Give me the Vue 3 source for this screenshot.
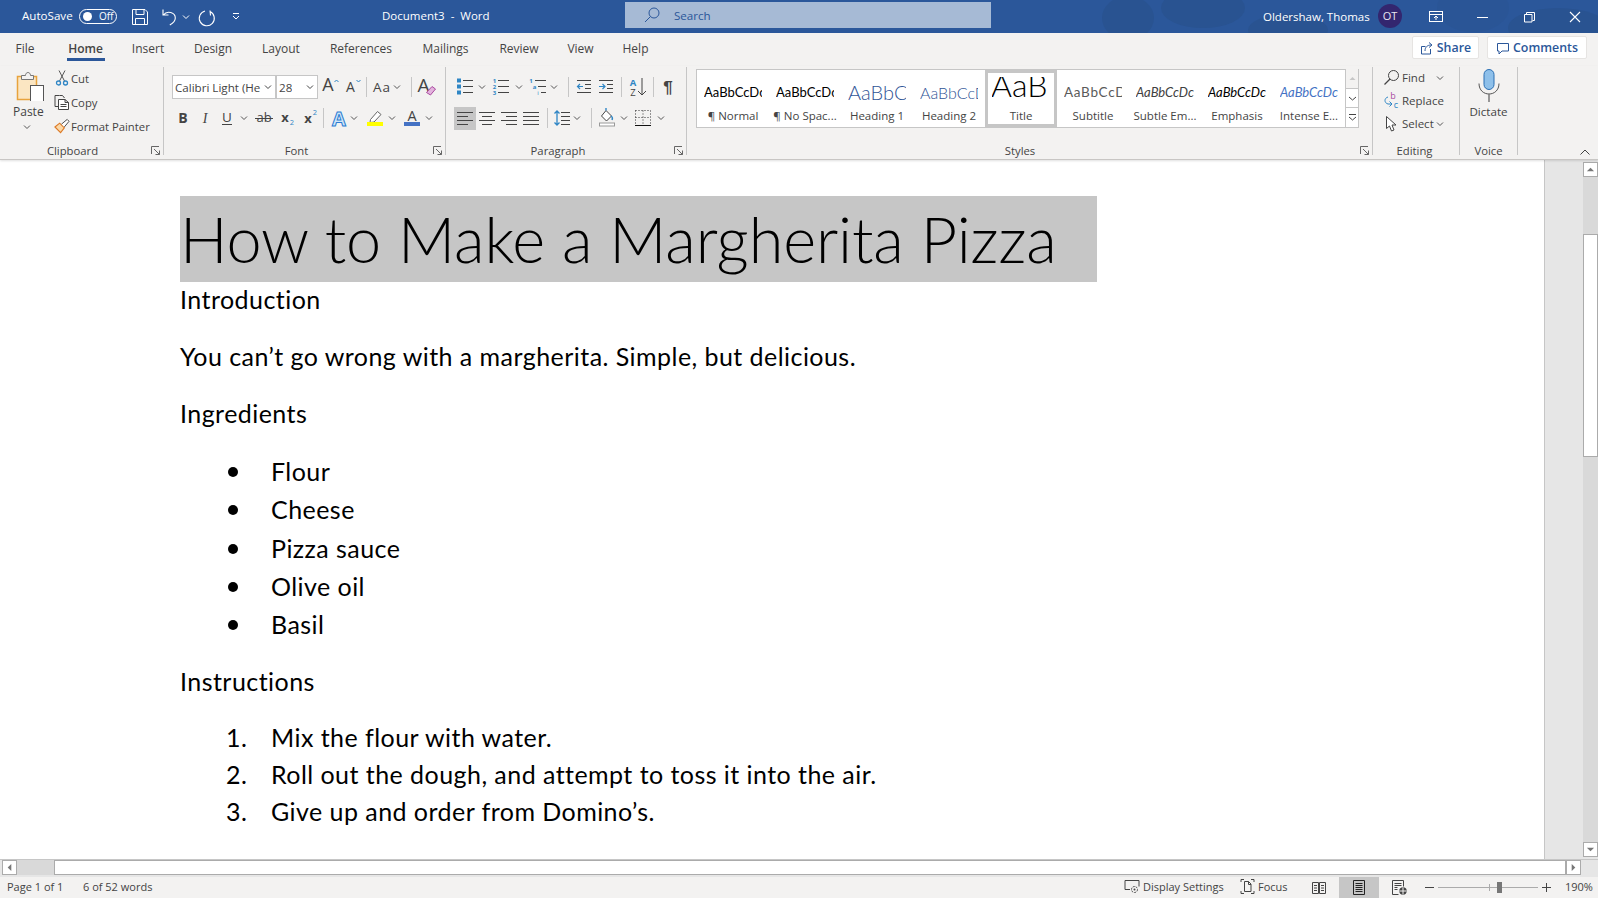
<script setup>
import { h } from 'vue'

const G = '#444'
const BL = '#2f86c5'
const F = 'font-family="Open Sans, sans-serif"'
const line = (x1, y, x2, c = G) => `<path d="M${x1} ${y}.5H${x2}" stroke="${c}" fill="none"/>`
const lines = (arr) => arr.map((a) => line(a[0], a[1], a[2])).join('')

const ICONS = {
  chev: [8, `<path d="M1 8.5l3 3 3-3" fill="none" stroke="#555"/>`],
  chevw: [8, `<path d="M1 8.5l3 3 3-3" fill="none" stroke="#fff"/>`],
  sep: [1, `<rect width="1" height="20" fill="#c6c6c6"/>`],
  grow: [20, `<text x="8" y="14" font-size="18" text-anchor="middle" ${F} fill="${G}">A</text><path d="M14.5 5l2-2 2 2" fill="none" stroke="${BL}"/>`],
  shrink: [20, `<text x="8.5" y="14.5" font-size="14" text-anchor="middle" ${F} fill="${G}">A</text><path d="M14.5 3l2 2 2-2" fill="none" stroke="${BL}"/>`],
  aa: [20, `<text x="10" y="14.5" font-size="13.5" letter-spacing="1" text-anchor="middle" ${F} fill="${G}">Aa</text>`],
  clear: [20, `<text x="6.5" y="15" font-size="19" text-anchor="middle" ${F} fill="${G}">A</text><path d="M9.5 15.5l5.5-6 3.5 2.5-5 6z" fill="#e3b3dd" stroke="#a94aa0"/>`],
  bold: [20, `<text x="10" y="15" font-size="14" font-weight="700" text-anchor="middle" ${F} fill="${G}">B</text>`],
  ital: [20, `<text x="10" y="15" font-size="14" font-style="italic" text-anchor="middle" font-family="Liberation Serif, serif" fill="${G}">I</text>`],
  under: [20, `<text x="10" y="14" font-size="13.5" text-anchor="middle" ${F} fill="${G}">U</text>${line(5, 16, 15)}`],
  strike: [20, `<text x="10" y="14" font-size="13" text-anchor="middle" ${F} fill="${G}">ab</text>${line(1, 10, 19)}`],
  sub: [20, `<text x="8" y="14" font-size="13" font-weight="700" text-anchor="middle" ${F} fill="${G}">x</text><text x="15" y="17" font-size="7.5" text-anchor="middle" ${F} fill="${BL}">2</text>`],
  sup: [20, `<text x="8" y="15" font-size="13" font-weight="700" text-anchor="middle" ${F} fill="${G}">x</text><text x="15" y="7" font-size="7.5" text-anchor="middle" ${F} fill="${BL}">2</text>`],
  fx: [22, `<text x="11" y="17.5" font-size="20" font-weight="700" text-anchor="middle" ${F} fill="#cfe6f7" stroke="#2b7cd3" stroke-width="1">A</text>`],
  hl: [20, `<path d="M5.5 11.5l7-8 3.5 3-7 7.5-4 .5z" fill="#fff" stroke="#666"/><rect x="2" y="14" width="16" height="4" fill="#ffff00"/>`],
  color: [20, `<text x="10" y="12.5" font-size="14.5" text-anchor="middle" ${F} fill="${G}">A</text><rect x="2" y="14" width="16" height="4" fill="#4472c4"/>`],
  bullets: [20, `<rect x="2" y="1.5" width="4" height="4" fill="${BL}"/><rect x="2" y="7.5" width="4" height="4" fill="${BL}"/><rect x="2" y="13.5" width="4" height="4" fill="${BL}"/>${lines([[8, 3, 18], [8, 9, 18], [8, 15, 18]])}`],
  num: [20, `<text x="3.5" y="6" font-size="6" font-weight="700" text-anchor="middle" ${F} fill="${BL}">1</text><text x="3.5" y="12" font-size="6" font-weight="700" text-anchor="middle" ${F} fill="${BL}">2</text><text x="3.5" y="18" font-size="6" font-weight="700" text-anchor="middle" ${F} fill="${BL}">3</text>${lines([[7, 3, 18], [7, 9, 18], [7, 15, 18]])}`],
  multi: [20, `<text x="3" y="6" font-size="6" font-weight="700" text-anchor="middle" ${F} fill="${BL}">1</text><text x="6.5" y="12" font-size="6" font-weight="700" text-anchor="middle" ${F} fill="${BL}">a</text><text x="10" y="18" font-size="6" text-anchor="middle" ${F} fill="${BL}">i</text>${lines([[7, 3, 18], [10, 9, 18], [13, 15, 18]])}`],
  outdent: [20, `${lines([[3, 3, 17], [11, 7, 17], [11, 11, 17], [3, 15, 17]])}<path d="M9 9.5H3.5m2.5-2.5l-2.5 2.5 2.5 2.5" fill="none" stroke="${BL}" stroke-width="1.2"/>`],
  indent: [20, `${lines([[3, 3, 17], [11, 7, 17], [11, 11, 17], [3, 15, 17]])}<path d="M3 9.5h6m-2.5-2.5l2.5 2.5-2.5 2.5" fill="none" stroke="${BL}" stroke-width="1.2"/>`],
  sort: [20, `<text x="6" y="8.5" font-size="9.5" font-weight="700" text-anchor="middle" ${F} fill="${BL}">A</text><text x="6" y="18.5" font-size="9.5" text-anchor="middle" ${F} fill="${G}">Z</text><path d="M15 1v17m-4-4l4 4 4-4" fill="none" stroke="${G}"/>`],
  pil: [20, `<text x="10" y="15.5" font-size="17" font-weight="700" text-anchor="middle" font-family="Liberation Sans, sans-serif" fill="${G}">¶</text>`],
  left: [20, lines([[2, 4, 18], [2, 8, 13], [2, 12, 18], [2, 16, 13]])],
  center: [20, lines([[2, 4, 18], [5, 8, 15], [2, 12, 18], [5, 16, 15]])],
  right: [20, lines([[2, 4, 18], [7, 8, 18], [2, 12, 18], [7, 16, 18]])],
  just: [20, lines([[2, 4, 18], [2, 8, 18], [2, 12, 18], [2, 16, 18]])],
  spacing: [20, `${lines([[9, 4, 18], [9, 8, 18], [9, 12, 18], [9, 16, 18]])}<path d="M5 3v14M2.5 5.5L5 3l2.5 2.5M2.5 14.5L5 17l2.5-2.5" fill="none" stroke="${BL}" stroke-width="1.3"/>`],
  shade: [20, `<path d="M9 2.5l5.5 5.5-5 5-5-5z" fill="#fff" stroke="${G}"/><path d="M9 2.5V0M14 8c1.5 1 1.5 3 1 4" fill="none" stroke="${BL}" stroke-width="1.4"/><rect x="2.5" y="15" width="15" height="3" fill="#fff" stroke="#999"/>`],
  borders: [20, `<path d="M2.5 2.5H17.5V17M2.5 2.5V17M10 2.5V17M2.5 9.5H17.5" fill="none" stroke="#333" stroke-dasharray="1 2"/><path d="M2 17.5H18" stroke="#111" fill="none"/>`],
  save: [18, `<path d="M1.5 2.5h12.5l2.5 2.5v12.500H1.500z" fill="none" stroke="#fff"/><path d="M5 2.500v5h8v-5M4.500 17.500v-6h9v6" fill="none" stroke="#fff"/>`],
  undo: [18, `<path d="M2 2.500v5.500h5.500M2.300 8c4-5 12-2.500 12 3 0 3-2 5-5.500 7" fill="none" stroke="#fff" stroke-width="1.1"/>`],
  redo: [18, `<path d="M11 1.500l.5 5M11 2.500a7.500 7.500 0 1 1-5-.5" fill="none" stroke="#fff" stroke-width="1.1" transform="translate(0 2)"/>`],
  qat: [8, `<path d="M1 6.500h6M1 9l3 3 3-3" fill="none" stroke="#fff"/>`],
  display: [16, `<rect x="1.500" y="4.500" width="13" height="10" fill="none" stroke="#fff"/><path d="M1.500 7.500h13M8 13V9M6 11l2-2 2 2" fill="none" stroke="#fff"/>`],
  min: [14, `<path d="M1 10.500h11" stroke="#fff" fill="none"/>`],
  restore: [14, `<path d="M2.500 7.500h7.500v7.500H2.500zM4.500 7V5.500h8v8H10.500" fill="none" stroke="#fff"/>`],
  close: [14, `<path d="M2 5l10 10M12 5L2 15" stroke="#fff" fill="none" stroke-width="1.1"/>`],
}

function place(start, items) {
  let end = start
  return items.map(([n, cx]) => {
    const w = ICONS[n][0]
    const m = cx - w / 2 - end
    end = cx + w / 2
    return { n, w, m }
  })
}

const ToolRow = (p) =>
  h('div', { class: 'tool-row' }, place(p.start, p.items).map((it) =>
    h('svg', { class: 'tool', width: it.w, height: 20, viewBox: `0 0 ${it.w} 20`, style: { marginLeft: it.m + 'px' }, innerHTML: ICONS[it.n][1] })
  ))
ToolRow.props = ['start', 'items']

const qat = [['save', 140], ['undo', 169.5], ['chevw', 186], ['redo', 208], ['qat', 236]]
const winBtns = [['display', 1437], ['min', 1484], ['restore', 1530], ['close', 1576]]
const font1 = [['grow', 330], ['shrink', 352], ['sep', 366.5], ['aa', 382], ['chev', 397], ['sep', 411.5], ['clear', 427]]
const font2 = [['bold', 183], ['ital', 205], ['under', 226.5], ['chev', 244], ['strike', 264], ['sub', 287], ['sup', 309.5], ['sep', 323.5], ['fx', 339], ['chev', 354], ['hl', 375], ['chev', 392], ['color', 412], ['chev', 429]]
const para1 = [['bullets', 465], ['chev', 482], ['num', 501], ['chev', 519], ['multi', 538], ['chev', 554], ['sep', 568.5], ['outdent', 584], ['indent', 606], ['sep', 621.5], ['sort', 637], ['sep', 653.5], ['pil', 668]]
const para2 = [['left', 465], ['center', 487], ['right', 509], ['just', 531], ['sep', 547.5], ['spacing', 562], ['chev', 577], ['sep', 591.5], ['shade', 607], ['chev', 624], ['borders', 643], ['chev', 661]]

const tabs = [
  { t: 'File', w: 50 }, { t: 'Home', w: 71, on: true }, { t: 'Insert', w: 54 }, { t: 'Design', w: 76 },
  { t: 'Layout', w: 60 }, { t: 'References', w: 100 }, { t: 'Mailings', w: 69 }, { t: 'Review', w: 78 },
  { t: 'View', w: 45 }, { t: 'Help', w: 65 },
]
const styles = [
  { s: 'AaBbCcDc', l: '¶ Normal', c: 'st-normal' },
  { s: 'AaBbCcDc', l: '¶ No Spac...', c: 'st-normal' },
  { s: 'AaBbCc', l: 'Heading 1', c: 'st-h1' },
  { s: 'AaBbCcD', l: 'Heading 2', c: 'st-h2' },
  { s: 'AaB', l: 'Title', c: 'st-title', on: true },
  { s: 'AaBbCcD', l: 'Subtitle', c: 'st-sub' },
  { s: 'AaBbCcDc', l: 'Subtle Em...', c: 'st-se' },
  { s: 'AaBbCcDc', l: 'Emphasis', c: 'st-em' },
  { s: 'AaBbCcDc', l: 'Intense E...', c: 'st-ie' },
]
const ingredients = ['Flour', 'Cheese', 'Pizza sauce', 'Olive oil', 'Basil']
const steps = ['Mix the flour with water.', 'Roll out the dough, and attempt to toss it into the air.', 'Give up and order from Domino’s.']
</script>

<template>
  <div class="app">
    <header class="titlebar">
      <svg class="blobs" width="600" height="33" viewBox="0 0 600 33">
        <ellipse cx="130" cy="18" rx="26" ry="22" fill="#295391" />
        <ellipse cx="205" cy="8" rx="42" ry="20" fill="#295391" />
        <ellipse cx="290" cy="30" rx="40" ry="16" fill="#295391" />
        <ellipse cx="475" cy="8" rx="36" ry="24" fill="#2a5596" />
        <ellipse cx="560" cy="28" rx="50" ry="20" fill="#295391" />
      </svg>
      <span class="as-label">AutoSave</span>
      <span class="toggle"><i class="knob"></i><b class="off">Off</b></span>
      <ToolRow :start="117" :items="qat" />
      <span class="doc-title">Document3&nbsp; -&nbsp; Word</span>
      <div class="search">
        <svg width="16" height="16" viewBox="0 0 16 16"><circle cx="10" cy="6" r="5" fill="none" stroke="#2b579a" /><path d="M6.500 9.500L1 15" stroke="#2b579a" fill="none" /></svg>
        <span>Search</span>
      </div>
      <span class="user">Oldershaw, Thomas</span>
      <span class="avatar">OT</span>
      <ToolRow :start="1403" :items="winBtns" />
    </header>

    <nav class="tabs">
      <a v-for="tab in tabs" :key="tab.t" class="tab" :class="{ on: tab.on }" :style="{ width: tab.w + 'px' }"><span>{{ tab.t }}</span></a>
      <button class="pill share">
        <svg width="14" height="14" viewBox="0 0 14 14"><path d="M1.500 5.500h4M1.500 5.500v7.500h9V8M5 10c0-4 2.500-6 6-6M9 1.500l3 2.500-3 2.500" fill="none" stroke="#2b579a" /></svg>
        Share
      </button>
      <button class="pill comments">
        <svg width="14" height="14" viewBox="0 0 14 14"><path d="M1.500 2.500h11v7.500H6l-3 3v-3H1.500z" fill="none" stroke="#2b579a" /></svg>
        Comments
      </button>
    </nav>

    <section class="ribbon">
      <div class="group g-clip">
        <div class="body clip">
          <div class="paste">
            <svg width="30" height="32" viewBox="0 0 30 32">
              <rect x="1.500" y="7.500" width="19" height="23" fill="#fbe6c2" stroke="#e8a33d" stroke-width="1.500" />
              <path d="M5.500 10.500V6.500h4c0-4 5-4 5 0h3v4z" fill="#f3f2f1" stroke="#777" />
              <rect x="14.500" y="16.500" width="13" height="17" fill="#fff" stroke="#555" />
            </svg>
            <span>Paste</span>
            <svg width="8" height="8" viewBox="0 0 8 8"><path d="M1 2.500l3 3 3-3" fill="none" stroke="#555" /></svg>
          </div>
          <div class="clip-list">
            <div class="clip-row">
              <svg width="16" height="16" viewBox="0 0 16 16"><path d="M5 0.500l5.500 10.500M11 0.500L5.500 11" fill="none" stroke="#555" /><circle cx="4.500" cy="13" r="2" fill="none" stroke="#2f86c5" stroke-width="1.300" /><circle cx="11.500" cy="13" r="2" fill="none" stroke="#2f86c5" stroke-width="1.300" /></svg>
              <span>Cut</span>
            </div>
            <div class="clip-row">
              <svg width="16" height="16" viewBox="0 0 16 16"><path d="M5.500 1.500H1V12.500H4M5.500 1.500h3l2 2.500" fill="none" stroke="#444" /><path d="M4.500 5.500H11l3.500 3v7h-10zM11 5.500v3h3.500M6.500 10.500h6M6.500 12.500h6" fill="#fff" stroke="#444" /></svg>
              <span>Copy</span>
            </div>
            <div class="clip-row">
              <svg width="17" height="16" viewBox="0 0 17 16"><path d="M1 9l5-4 5 5-4 5z" fill="#fbd9a8" stroke="#dd7a27" stroke-width="1.200" /><path d="M8 6l6-5 2 2-5 6" fill="#fff" stroke="#444" /></svg>
              <span>Format Painter</span>
            </div>
          </div>
        </div>
        <div class="label">Clipboard</div>
        <svg class="launch" width="9" height="9" viewBox="0 0 9 9"><path d="M0.500 8V0.500H8M8.500 8.500L3 3M8.500 4.500v4h-4" fill="none" stroke="#666" /></svg>
      </div>

      <div class="group g-font">
        <div class="body rows">
          <div class="row">
            <div class="combo c-font"><span>Calibri Light (He</span><svg width="8" height="8" viewBox="0 0 8 8"><path d="M1 2.500l3 3 3-3" fill="none" stroke="#444" /></svg></div>
            <div class="combo c-size"><span>28</span><svg width="8" height="8" viewBox="0 0 8 8"><path d="M1 2.500l3 3 3-3" fill="none" stroke="#444" /></svg></div>
            <ToolRow class="drop2" :start="318" :items="font1" />
          </div>
          <ToolRow :start="164" :items="font2" />
        </div>
        <div class="label">Font</div>
        <svg class="launch" width="9" height="9" viewBox="0 0 9 9"><path d="M0.500 8V0.500H8M8.500 8.500L3 3M8.500 4.500v4h-4" fill="none" stroke="#666" /></svg>
      </div>

      <div class="group g-para">
        <div class="body rows">
          <div class="row">
            <ToolRow class="drop2" :start="446" :items="para1" />
          </div>
          <div class="para2">
            <span class="active-align"></span>
            <ToolRow class="over" :start="446" :items="para2" />
          </div>
        </div>
        <div class="label">Paragraph</div>
        <svg class="launch" width="9" height="9" viewBox="0 0 9 9"><path d="M0.500 8V0.500H8M8.500 8.500L3 3M8.500 4.500v4h-4" fill="none" stroke="#666" /></svg>
      </div>

      <div class="group g-styles">
        <div class="body">
          <div class="gallery">
            <div v-for="st in styles" :key="st.l" class="style" :class="{ on: st.on }">
              <div class="sample" :class="st.c"><span>{{ st.s }}</span></div>
              <div class="st-label">{{ st.l }}</div>
            </div>
            <div class="gal-scroll">
              <span class="gs"><svg width="9" height="9" viewBox="0 0 9 9"><path d="M1.500 6l3-3 3 3z" fill="#c6c6c6" /></svg></span>
              <span class="gs dark"><svg width="9" height="9" viewBox="0 0 9 9"><path d="M1 3l3.500 3 3.500-3" fill="none" stroke="#444" /></svg></span>
              <span class="gs dark"><svg width="9" height="9" viewBox="0 0 9 9"><path d="M1 1.500h7M1 4l3.500 3L8 4" fill="none" stroke="#444" /></svg></span>
            </div>
          </div>
        </div>
        <div class="label">Styles</div>
        <svg class="launch" width="9" height="9" viewBox="0 0 9 9"><path d="M0.500 8V0.500H8M8.500 8.500L3 3M8.500 4.500v4h-4" fill="none" stroke="#666" /></svg>
      </div>

      <div class="group g-edit">
        <div class="body edit">
          <div class="edit-row">
            <svg width="17" height="17" viewBox="0 0 17 17"><circle cx="10.500" cy="6.500" r="5" fill="none" stroke="#444" /><path d="M7 10L1.500 15.500" stroke="#444" fill="none" stroke-width="1.300" /></svg>
            <span>Find</span>
            <svg class="ch-find" width="8" height="8" viewBox="0 0 8 8"><path d="M1 2.500l3 3 3-3" fill="none" stroke="#555" /></svg>
          </div>
          <div class="edit-row">
            <svg width="17" height="17" viewBox="0 0 17 17">
              <text x="10" y="7" font-size="9" text-anchor="middle" font-family="Open Sans, sans-serif" fill="#a94aa0">b</text>
              <text x="13" y="16" font-size="9" text-anchor="middle" font-family="Open Sans, sans-serif" fill="#2f86c5">c</text>
              <path d="M5 5C1 6 1 11 5 12h4M6.500 9.500l2.500 2.500-2.500 2.500" fill="none" stroke="#2f86c5" />
            </svg>
            <span>Replace</span>
          </div>
          <div class="edit-row">
            <svg width="17" height="17" viewBox="0 0 17 17"><path d="M3.500 1.500v12l3-2.500 2 5 2.500-1-2-5h4z" fill="#fff" stroke="#444" /></svg>
            <span>Select</span>
            <svg class="ch-sel" width="8" height="8" viewBox="0 0 8 8"><path d="M1 2.500l3 3 3-3" fill="none" stroke="#555" /></svg>
          </div>
        </div>
        <div class="label">Editing</div>
      </div>

      <div class="group g-voice">
        <div class="body voice">
          <svg width="22" height="33" viewBox="0 0 22 33">
            <rect x="6" y="0.500" width="10" height="20" rx="5" fill="#8ec0ea" stroke="#2b6fb3" />
            <path d="M1 14.500c0 14 20 14 20 0" fill="none" stroke="#555" />
            <path d="M11 25v8" stroke="#777" stroke-width="1.500" fill="none" />
          </svg>
          <span>Dictate</span>
        </div>
        <div class="label">Voice</div>
      </div>

      <svg class="collapse" width="12" height="8" viewBox="0 0 12 8"><path d="M1.500 6.500L6 2l4.500 4.500" fill="none" stroke="#444" /></svg>
    </section>

    <main class="workspace">
      <article class="page">
        <h1 class="doc-h1">How to Make a Margherita Pizza</h1>
        <p class="para">Introduction</p>
        <p class="para">You can’t go wrong with a margherita. Simple, but delicious.</p>
        <p class="para">Ingredients</p>
        <ul class="list">
          <li v-for="i in ingredients" :key="i"><span class="dot"></span><span>{{ i }}</span></li>
        </ul>
        <p class="para after-list">Instructions</p>
        <ol class="list steps">
          <li v-for="(s, n) in steps" :key="s"><span class="num">{{ n + 1 }}.</span><span>{{ s }}</span></li>
        </ol>
      </article>
      <aside class="strip">
        <div class="vbar">
          <span class="sbtn"><svg width="10" height="10" viewBox="0 0 10 10"><path d="M1 7l4-4 4 4z" fill="#777" /></svg></span>
          <span class="vtrack"></span>
          <span class="vthumb"></span>
          <span class="vrest"></span>
          <span class="sbtn"><svg width="10" height="10" viewBox="0 0 10 10"><path d="M1 3l4 4 4-4z" fill="#777" /></svg></span>
        </div>
      </aside>
    </main>

    <div class="hbar">
      <span class="sbtn"><svg width="10" height="10" viewBox="0 0 10 10"><path d="M7 1L3 5l4 4z" fill="#777" /></svg></span>
      <span class="htrack"></span>
      <span class="hthumb"></span>
      <span class="sbtn"><svg width="10" height="10" viewBox="0 0 10 10"><path d="M3 1l4 4-4 4z" fill="#777" /></svg></span>
    </div>

    <footer class="status">
      <span class="st-page">Page 1 of 1</span>
      <span>6 of 52 words</span>
      <div class="st-right">
        <div class="st-item w-disp">
          <svg width="16" height="15" viewBox="0 0 16 15"><path d="M1 10.500V1.500h14v6M1 10.500h5" fill="none" stroke="#444" /><circle cx="10.500" cy="10.500" r="3" fill="none" stroke="#444" stroke-dasharray="2 1" /><circle cx="10.500" cy="10.500" r="1" fill="#444" /></svg>
          <span>Display Settings</span>
        </div>
        <div class="st-item w-focus">
          <svg width="15" height="15" viewBox="0 0 15 15"><path d="M1 3V.5h3M11 .5h3V3M1 12v2.500h3M11 14.500h3V12" fill="none" stroke="#444" /><path d="M4.500 2.500h4l2.500 2.500v7.500H4.500zM8.500 2.500v3H11" fill="none" stroke="#444" /></svg>
          <span>Focus</span>
        </div>
        <div class="st-view w-read">
          <svg width="14" height="14" viewBox="0 0 14 14"><path d="M.5 1.500h6v11h-6zM7.500 1.500h6v11h-6zM2 4.500h3M2 7h3M2 9.500h3M9 4.500h3M9 7h3M9 9.500h3" fill="none" stroke="#444" /></svg>
        </div>
        <div class="st-view w-print">
          <svg width="12" height="15" viewBox="0 0 12 15"><path d="M.5.500h11v14H.5zM2.500 3.500h7M2.500 5.500h7M2.500 7.500h7M2.500 9.500h7M2.500 11.500h7" fill="none" stroke="#222" /></svg>
        </div>
        <div class="st-view w-web">
          <svg width="15" height="15" viewBox="0 0 15 15"><path d="M6.500 14.500h-6V.5h11v6M2.500 3.500h7M2.500 5.500h7M2.500 7.500h3M2.500 9.500h3" fill="none" stroke="#444" /><circle cx="11" cy="11" r="3.700" fill="#444" /><path d="M7.500 11h7M11 7.500v7" stroke="#f3f2f1" fill="none" /></svg>
        </div>
        <div class="zoom">
          <svg width="9" height="9" viewBox="0 0 9 9"><path d="M0 4.500h9" stroke="#444" fill="none" /></svg>
          <div class="slider"><i class="tick"></i><i class="sthumb"></i></div>
          <svg width="9" height="9" viewBox="0 0 9 9"><path d="M0 4.500h9M4.500 0v9" stroke="#444" fill="none" /></svg>
        </div>
        <span class="pct">190%</span>
      </div>
    </footer>
  </div>
</template>

<style scoped>
.app { width: 1598px; height: 898px; display: flex; flex-direction: column; overflow: hidden; background: #f3f2f1; color: #444; font-family: "Open Sans", "Noto Sans", sans-serif; font-size: 12px; }

.titlebar { position: relative; height: 33px; flex: none; display: flex; align-items: center; padding-left: 22px; background: #2b579a; color: #fff; box-sizing: border-box; }
.blobs { position: absolute; right: 0; top: 0; }
.titlebar > * { position: relative; }
.titlebar > .blobs { position: absolute; }
.as-label { width: 50px; font-size: 11.6px; white-space: nowrap; margin-top: -2px; }
.toggle { width: 38px; height: 15px; margin-left: 7px; border: 1px solid #fff; border-radius: 9px; display: flex; align-items: center; box-sizing: border-box; margin-top: -1px; }
.knob { width: 9px; height: 9px; margin-left: 3px; border-radius: 50%; background: #fff; }
.off { font-weight: 400; font-size: 10px; margin-left: 7px; }
.doc-title { width: 243px; margin-left: 142px; font-size: 11.5px; white-space: nowrap; flex: none; margin-top: -2px; }
.search { width: 366px; height: 26px; flex: none; display: flex; align-items: center; gap: 14px; padding-left: 19px; box-sizing: border-box; background: #a6bad5; color: #2b579a; font-size: 11.6px; margin-top: -3px; }
.user { width: 114px; margin-left: 272px; font-size: 11.5px; white-space: nowrap; flex: none; }
.avatar { width: 24px; height: 24px; flex: none; border-radius: 50%; background: #33266f; color: #e8e4f0; font-size: 11px; display: flex; align-items: center; justify-content: center; margin-top: -2px; margin-left: 1px; }

.tabs { height: 33px; flex: none; display: flex; align-items: center; background: #f3f2f1; }
.tab { height: 33px; flex: none; display: flex; align-items: center; justify-content: center; font-size: 12px; white-space: nowrap; position: relative; padding-bottom: 2px; box-sizing: border-box; }
.tab.on { font-weight: 600; }
.tab.on::after { content: ""; position: absolute; left: 17px; right: 16px; top: 25px; height: 3px; background: #2b579a; }
.pill { height: 23px; display: flex; align-items: center; justify-content: center; gap: 3px; background: #fff; border: 1px solid #e6e4e2; border-radius: 2px; color: #2b579a; font: 600 12.4px "Open Sans", sans-serif; padding: 0; box-sizing: border-box; margin-top: -4px; }
.share { width: 67px; margin-left: 744px; }
.comments { width: 100px; margin-left: 8px; }

.ribbon { height: 94px; flex: none; display: flex; box-sizing: border-box; border-bottom: 1px solid #c8c6c4; box-shadow: 0 1px 2px rgba(0, 0, 0, .12); background: #f3f2f1; position: relative; z-index: 1; }
.group { position: relative; height: 88px; margin-top: 1px; flex: none; display: flex; flex-direction: column; border-right: 1px solid #c6c6c6; box-sizing: border-box; }
.g-clip { width: 164px; }
.g-font { width: 282px; }
.g-para { width: 241px; }
.g-styles { width: 686px; }
.g-edit { width: 87px; }
.g-voice { width: 58px; }
.body { height: 78px; flex: none; }
.label { height: 12px; line-height: 12px; text-align: center; font-size: 11.3px; white-space: nowrap; }
.g-clip .label { padding-right: 18px; }
.g-font .label { padding-right: 16px; }
.g-para .label { padding-right: 16px; }
.g-styles .label { padding-right: 19px; }
.g-edit .label { padding-right: 3px; }
.launch { position: absolute; right: 3px; bottom: 0; }

.clip { display: flex; }
.paste { width: 54px; flex: none; padding: 2px 0 0 16px; box-sizing: border-box; display: flex; flex-direction: column; align-items: flex-start; }
.paste span { margin: 2px 0 0 -3px; }
.paste svg:last-child { margin: 3px 0 0 7px; }
.clip-list { display: flex; flex-direction: column; margin-top: -1px; }
.clip-row { height: 24px; display: flex; align-items: center; gap: 1px; white-space: nowrap; font-size: 11.3px; }
.clip-row svg { width: 16px; flex: none; }

.rows { padding-top: 8px; box-sizing: border-box; display: flex; flex-direction: column; gap: 11px; }
.row { display: flex; align-items: flex-start; height: 22px; }
.drop2 { margin-top: 2px; }
.combo { height: 24px; background: #fff; border: 1px solid #c6c6c6; box-sizing: border-box; display: flex; align-items: center; justify-content: space-between; padding: 0 3px 0 2px; overflow: hidden; flex: none; font-size: 11.6px; white-space: nowrap; }
.combo span { overflow: hidden; }
.combo svg { flex: none; }
.c-font { width: 104px; margin-left: 8px; }
.c-font span { width: 87px; }
.c-size { width: 42px; }
.para2 { position: relative; }
.active-align { position: absolute; left: 8px; top: -1px; width: 22px; height: 23px; background: #c6c6c6; }
.over { position: relative; }

.gallery { margin: 2px 0 0 9px; width: 663px; height: 59px; background: #fff; border: 1px solid #c6c6c6; box-sizing: border-box; display: flex; }
.style { width: 72px; height: 57px; flex: none; box-sizing: border-box; display: flex; flex-direction: column; align-items: center; }
.style.on { border: 3px solid #c6c6c6; }
.sample { width: 58px; height: 38px; padding-top: 6px; box-sizing: border-box; overflow: hidden; display: flex; align-items: center; white-space: nowrap; font-family: Lato, sans-serif; color: #000; flex: none; }
.st-label { font-size: 11.5px; line-height: 16px; white-space: nowrap; }
.st-normal { font-size: 13px; }
.st-h1 { font-size: 20px; font-weight: 300; color: #2f5496; }
.st-h2 { font-size: 16px; font-weight: 300; color: #2f5496; }
.st-title { font-size: 32px; font-weight: 300; align-items: flex-start; height: 31px; padding-top: 0; margin-top: 4px; }
.st-title span { margin: -12px 0 0 -1px; }
.st-sub { font-size: 13.5px; color: #5a5a5a; letter-spacing: .7px; }
.st-se { font-size: 13px; font-style: italic; color: #404040; }
.st-em { font-size: 13px; font-style: italic; }
.st-ie { font-size: 13px; font-style: italic; color: #4472c4; }
.gal-scroll { width: 13px; flex: none; display: flex; flex-direction: column; border-left: 1px solid #c6c6c6; margin-top: -1px; height: 59px; box-sizing: border-box; }
.gs { flex: 1; display: flex; align-items: center; justify-content: center; background: #f3f2f1; border-bottom: 1px solid #c6c6c6; }
.gs.dark { background: #fff; }

.edit { display: flex; flex-direction: column; padding: 0 0 0 10px; box-sizing: border-box; margin-top: -1px; margin-bottom: 1px; }
.edit-row { height: 23px; display: flex; align-items: center; gap: 2px; position: relative; font-size: 11.5px; }
.ch-find { margin-left: 9px; }
.voice { display: flex; flex-direction: column; align-items: center; padding-top: 2px; box-sizing: border-box; }
.voice span { margin-top: 2px; font-size: 11.6px; }
.collapse { align-self: flex-end; margin: 0 0 3px 61px; }

.workspace { height: 699px; flex: none; display: flex; background: #fff; }
.page { width: 1545px; flex: none; box-sizing: border-box; padding: 36px 0 0 180px; background: #fff; border-right: 1px solid #c6c6c6; color: #000; font-family: Lato, "Open Sans", sans-serif; }
.doc-h1 { width: 917px; height: 86px; margin: 0; background: #c6c6c6; font-weight: 300; font-size: 63px; line-height: 86px; letter-spacing: -.13px; white-space: nowrap; color: #000; }
.para { margin: 0 0 20px; height: 37px; line-height: 35px; font-size: 25px; letter-spacing: .45px; }
.list { list-style: none; margin: 0; padding: 0; font-size: 25px; letter-spacing: .45px; }
.list li { height: 38.25px; line-height: 36.25px; display: flex; align-items: flex-start; }
.dot { width: 10px; height: 10px; border-radius: 50%; background: #000; margin: 14px 33px 0 48px; flex: none; }
.after-list { margin-top: 20px; margin-bottom: 18px; }
.steps li { height: 37px; line-height: 37px; }
.num { width: 45px; margin-left: 46px; flex: none; }

.strip { flex: 1; background: #e6e6e6; display: flex; justify-content: flex-end; padding-top: 2px; }
.vbar { width: 15px; display: flex; flex-direction: column; height: 695px; }
.sbtn { flex: none; width: 15px; height: 15px; background: #fff; border: 1px solid #ababab; box-sizing: border-box; display: flex; align-items: center; justify-content: center; }
.sbtn svg { flex: none; width: 9px; height: 9px; }
.vtrack { height: 57px; flex: none; background: #d9d9d9; }
.vthumb { height: 223px; flex: none; background: #fff; border: 1px solid #ababab; box-sizing: border-box; }
.vrest { flex: 1; background: #d9d9d9; }

.hbar { height: 18px; flex: none; display: flex; align-items: flex-start; box-sizing: border-box; border-top: 1px solid #c6c6c6; padding: 0 0 0 2px; background: #e6e6e6; }
.htrack { width: 37px; height: 15px; background: #d9d9d9; flex: none; }
.hthumb { width: 1512px; height: 15px; background: #fff; border: 1px solid #ababab; box-sizing: border-box; flex: none; }

.status { height: 21px; flex: none; display: flex; align-items: center; font-size: 11px; background: #f3f2f1; white-space: nowrap; padding-bottom: 3px; box-sizing: border-box; }
.st-page { width: 76px; margin-left: 7px; }
.st-right { margin-left: auto; display: flex; align-items: center; height: 21px; margin-bottom: -3px; }
.st-item { display: flex; align-items: center; gap: 3px; flex: none; padding-bottom: 2px; box-sizing: border-box; }
.w-disp { width: 116px; }
.w-focus { width: 72px; }
.st-view { height: 21px; display: flex; align-items: center; flex: none; box-sizing: border-box; }
.w-read { width: 27px; }
.w-print { width: 40px; background: #c6c6c6; justify-content: center; }
.w-web { width: 33px; padding-left: 13px; }
.zoom { display: flex; align-items: center; gap: 4px; width: 153px; padding-left: 13px; box-sizing: border-box; flex: none; }
.slider { width: 100px; height: 1px; background: #ababab; position: relative; flex: none; }
.tick { position: absolute; left: 51px; top: -3px; width: 1px; height: 7px; background: #ababab; }
.sthumb { position: absolute; left: 59px; top: -5px; width: 5px; height: 11px; background: #777; }
.pct { width: 26px; flex: none; margin-right: 7px; padding-bottom: 2px; }
</style>

<style>
.tool-row { display: flex; align-items: center; height: 20px; }
.tool { flex: none; display: block; overflow: visible; }
</style>
